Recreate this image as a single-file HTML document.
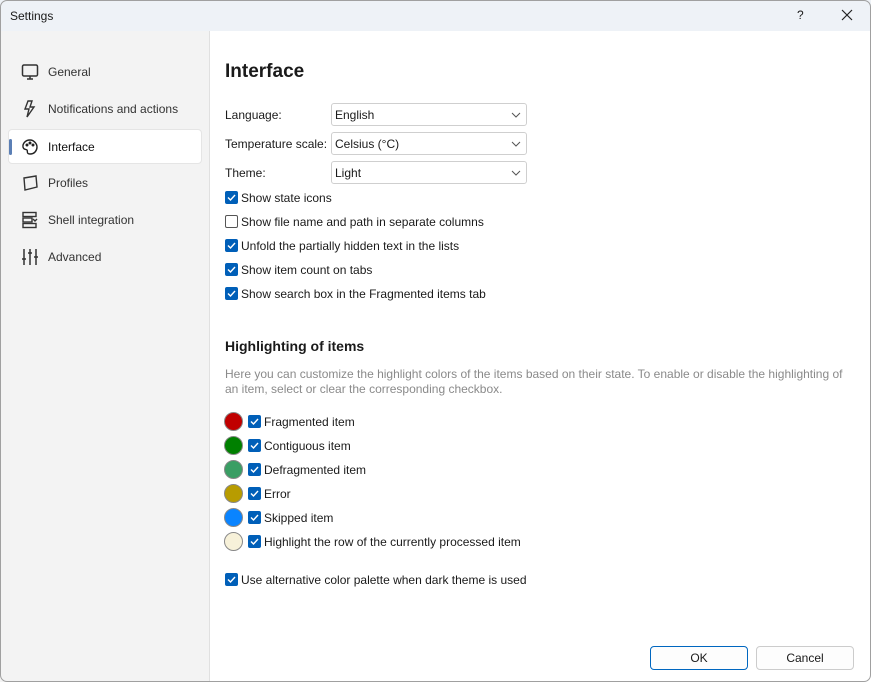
<!DOCTYPE html>
<html><head><style>
*{margin:0;padding:0;box-sizing:border-box}
body{width:871px;height:682px;overflow:hidden;font-family:"Liberation Sans",sans-serif;font-size:12px;color:#1a1a1a;background:#fff;position:relative}
.win{position:absolute;left:0;top:0;width:871px;height:682px;overflow:hidden;background:#fff}
.frame{position:absolute;left:0;top:0;width:871px;height:682px;border:1px solid #a0a0a0;border-radius:7px;pointer-events:none}
.title{position:absolute;left:0;top:0;width:100%;height:31px;background:#eef2f7}
.title span{position:absolute;left:10px;top:9px}
.side{position:absolute;left:0;top:31px;width:210px;height:651px;background:#f3f3f3;border-right:1px solid #e0e0e0}
.nav{position:absolute;left:8px;width:194px;height:35px;color:#333}
.nav.sel{background:#fff;border:1px solid #e5e5e5;border-radius:4px;color:#111}
.nav .t{position:absolute;left:40px;top:11px}
.nav.sel .t{left:39px;top:10px}
.nav svg{position:absolute;left:13px;top:9px}
.nav.sel svg{left:12px;top:8px}
.bar{position:absolute;left:0px;top:9px;width:3px;height:16px;background:#5b7fb5;border-radius:2px}
.abs{position:absolute}
.sel2{position:absolute;left:331px;width:196px;height:23px;border:1px solid #cfcfcf;border-radius:3px;background:#fff}
.sel2 span{position:absolute;left:3px;top:4px}
.sel2 svg{position:absolute;right:5px;top:8px}
.cb{position:absolute;width:13px;height:13px;border-radius:2px;background:#005fb8}
.cb.off{background:#fff;border:1px solid #555}
.dot{position:absolute;left:224px;width:19px;height:19px;border-radius:50%;border:1px solid #888}
.btn{position:absolute;top:646px;width:98px;height:24px;border:1px solid #ccc;border-radius:4px;background:#fdfdfd;text-align:center;line-height:22px}
</style></head><body><div class="win">
<div class="title"><span>Settings</span>
<span style="left:797px;top:8px">?</span>
<svg class="abs" style="left:841px;top:9px" width="12" height="12"><path d="M1 1L11 11M11 1L1 11" stroke="#222" stroke-width="1.2"/></svg></div>
<div class="side">
<div class="nav" style="top:23px"><svg width="18" height="18" fill="none" stroke="#333" stroke-width="1.5"><rect x="1.5" y="2" width="15" height="11" rx="1.5"/><path d="M6 16h6M9 13v3"/></svg><span class="t">General</span></div>
<div class="nav" style="top:60px"><svg width="18" height="18" fill="none" stroke="#333" stroke-width="1.4"><path d="M7 1L4 9h4l-2 8 7-10H9l2-6z"/></svg><span class="t">Notifications and actions</span></div>
<div class="nav sel" style="top:98px"><div class="bar"></div><svg width="18" height="18" fill="none" stroke="#222" stroke-width="1.4"><path d="M9 2C4 2 1.5 6 2 9s3 2 4 3-1 4 3 4c5 0 7-4 7-7s-3-7-7-7z"/><circle cx="6" cy="7" r=".8"/><circle cx="9" cy="5" r=".8"/><circle cx="12" cy="7" r=".8"/></svg><span class="t">Interface</span></div>
<div class="nav" style="top:134px"><svg width="18" height="18" fill="none" stroke="#333" stroke-width="1.4"><path d="M3 4l12-2 1 11-12 3z"/></svg><span class="t">Profiles</span></div>
<div class="nav" style="top:171px"><svg width="18" height="18" fill="none" stroke="#333" stroke-width="1.4"><rect x="2" y="1.5" width="13" height="4"/><rect x="2" y="7" width="9" height="4"/><rect x="2" y="12.5" width="13" height="4"/><path d="M12 8l2 2 2-2"/></svg><span class="t">Shell integration</span></div>
<div class="nav" style="top:208px"><svg width="18" height="18" fill="none" stroke="#333" stroke-width="1.5"><path d="M3 1v16M9 1v16M15 1v16"/><path d="M1 11h4M7 5h4M13 9h4"/></svg><span class="t">Advanced</span></div>
</div>
<div class="abs" style="left:225px;top:61px;font-size:19px;font-weight:bold">Interface</div>
<div class="abs" style="left:225px;top:108px">Language:</div>
<div class="abs" style="left:225px;top:137px">Temperature scale:</div>
<div class="abs" style="left:225px;top:166px">Theme:</div>
<div class="sel2" style="top:103px"><span>English</span><svg width="10" height="6"><path d="M1 1l4 4 4-4" stroke="#555" fill="none"/></svg></div>
<div class="sel2" style="top:132px"><span>Celsius (°C)</span><svg width="10" height="6"><path d="M1 1l4 4 4-4" stroke="#555" fill="none"/></svg></div>
<div class="sel2" style="top:161px"><span>Light</span><svg width="10" height="6"><path d="M1 1l4 4 4-4" stroke="#555" fill="none"/></svg></div>
<div class="cb" style="left:225px;top:191px"></div><div class="abs" style="left:241px;top:191px">Show state icons</div>
<div class="cb off" style="left:225px;top:215px"></div><div class="abs" style="left:241px;top:215px">Show file name and path in separate columns</div>
<div class="cb" style="left:225px;top:239px"></div><div class="abs" style="left:241px;top:239px">Unfold the partially hidden text in the lists</div>
<div class="cb" style="left:225px;top:263px"></div><div class="abs" style="left:241px;top:263px">Show item count on tabs</div>
<div class="cb" style="left:225px;top:287px"></div><div class="abs" style="left:241px;top:287px">Show search box in the Fragmented items tab</div>
<div class="abs" style="left:225px;top:338px;font-size:14px;font-weight:bold">Highlighting of items</div>
<div class="abs" style="left:225px;top:367px;width:630px;color:#8a8a8a;line-height:15px">Here you can customize the highlight colors of the items based on their state. To enable or disable the highlighting of an item, select or clear the corresponding checkbox.</div>
<div class="dot" style="top:412px;background:#c00000"></div><div class="cb" style="left:248px;top:415px"></div><div class="abs" style="left:264px;top:415px">Fragmented item</div>
<div class="dot" style="top:436px;background:#008000"></div><div class="cb" style="left:248px;top:439px"></div><div class="abs" style="left:264px;top:439px">Contiguous item</div>
<div class="dot" style="top:460px;background:#3a9e64"></div><div class="cb" style="left:248px;top:463px"></div><div class="abs" style="left:264px;top:463px">Defragmented item</div>
<div class="dot" style="top:484px;background:#b89c00"></div><div class="cb" style="left:248px;top:487px"></div><div class="abs" style="left:264px;top:487px">Error</div>
<div class="dot" style="top:508px;background:#0a84ff"></div><div class="cb" style="left:248px;top:511px"></div><div class="abs" style="left:264px;top:511px">Skipped item</div>
<div class="dot" style="top:532px;background:#f7f1d9"></div><div class="cb" style="left:248px;top:535px"></div><div class="abs" style="left:264px;top:535px">Highlight the row of the currently processed item</div>
<div class="cb" style="left:225px;top:573px"></div><div class="abs" style="left:241px;top:573px">Use alternative color palette when dark theme is used</div>
<div class="btn" style="left:650px;border-color:#0067c0">OK</div>
<div class="btn" style="left:756px">Cancel</div>
</div>
<div class="frame"></div>
<svg style="position:absolute;left:0;top:0;pointer-events:none" width="871" height="682">
<g fill="none" stroke="#fff" stroke-width="1.4">
<path d="M228 197.5l2.5 2.5 4.5-5"/><path d="M228 245.5l2.5 2.5 4.5-5"/><path d="M228 269.5l2.5 2.5 4.5-5"/><path d="M228 293.5l2.5 2.5 4.5-5"/><path d="M228 579.5l2.5 2.5 4.5-5"/>
<path d="M251 421.5l2.5 2.5 4.5-5"/><path d="M251 445.5l2.5 2.5 4.5-5"/><path d="M251 469.5l2.5 2.5 4.5-5"/><path d="M251 493.5l2.5 2.5 4.5-5"/><path d="M251 517.5l2.5 2.5 4.5-5"/><path d="M251 541.5l2.5 2.5 4.5-5"/>
</g></svg>
</body></html>
